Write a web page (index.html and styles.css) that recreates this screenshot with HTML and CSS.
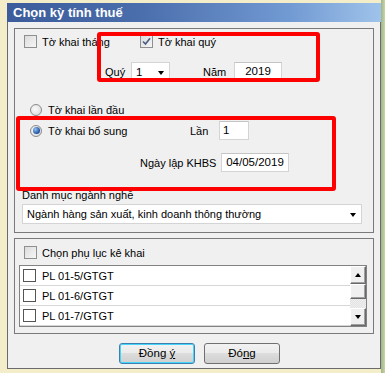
FILE: index.html
```html
<!DOCTYPE html>
<html>
<head>
<meta name="viewport" content="width=device-width, initial-scale=1">
<link rel="stylesheet" href="styles.css">
</head>
<body>
  <div class="screen">
    <div class="window">
      <div class="titlebar">Chọn kỳ tính thuế</div>

      <div class="client">
        <div class="group group-top">
          <div class="row row-kind">
            <label class="check-item item-month"><span class="check"></span>Tờ khai tháng</label>
            <label class="check-item"><span class="check"><svg width="9" height="9" viewBox="0 0 9 9"><path d="M1 4.5 L3.5 7 L8 1.2" fill="none" stroke="#4c5f86" stroke-width="1.7"/></svg></span>Tờ khai quý</label>
          </div>

          <div class="row row-period">
            <span class="lbl lbl-quarter">Quý</span>
            <div class="combo combo-quarter"><span>1</span><span class="arrow"></span></div>
            <span class="lbl lbl-year">Năm</span>
            <div class="field field-year">2019</div>
          </div>

          <div class="row row-first">
            <label class="radio-item"><span class="radio"></span>Tờ khai lần đầu</label>
          </div>

          <div class="row row-extra">
            <label class="radio-item item-extra"><span class="radio selected"></span>Tờ khai bổ sung</label>
            <span class="lbl lbl-times">Lần</span>
            <div class="field field-times">1</div>
          </div>

          <div class="row row-date">
            <span class="lbl lbl-date">Ngày lập KHBS</span>
            <div class="field field-date">04/05/2019</div>
          </div>

          <div class="row row-caption">
            <span class="lbl">Danh mục ngành nghề</span>
          </div>

          <div class="row row-trade">
            <div class="combo combo-trade"><span>Ngành hàng sản xuất, kinh doanh thông thường</span><span class="arrow"></span></div>
          </div>
        </div>

        <div class="group group-bottom">
          <div class="row row-annex">
            <label class="check-item"><span class="check"></span>Chọn phụ lục kê khai</label>
          </div>

          <div class="listbox">
            <ul class="list">
              <li><span class="check plain"></span>PL 01-5/GTGT</li>
              <li><span class="check plain"></span>PL 01-6/GTGT</li>
              <li><span class="check plain"></span>PL 01-7/GTGT</li>
            </ul>
            <div class="scrollbar">
              <div class="sb-btn"><span class="tri up"></span></div>
              <div class="sb-thumb"></div>
              <div class="sb-track"></div>
              <div class="sb-btn"><span class="tri down"></span></div>
            </div>
          </div>
        </div>

        <div class="buttons">
          <div class="btn btn-default">Đồng <u>ý</u></div>
          <div class="btn">Đó<u>n</u>g</div>
        </div>
      </div>
    </div>

    <!-- red highlight boxes drawn over the dialog -->
    <div class="mark mark-period"></div>
    <div class="mark mark-extra"></div>
  </div>
</body>
</html>
```

FILE: styles.css
```css
* {
  box-sizing: border-box;
}

body {
  margin: 0;
  font-family: "Liberation Sans", Arial, sans-serif;
  font-size: 11px;
  color: #000;
}

.screen {
  position: relative;
  width: 385px;
  height: 373px;
  overflow: hidden;
  background: linear-gradient(to right, #f4edca 0, #f4edca 381px, #9fb58a 381px, #c7d6a6 385px);
  padding: 3px 0 0 7px;
}

/* Dialog window */
.window {
  width: 374px;
  height: 366px;
  background: #f0f0f0;
  border: 1px solid #6b6b6b;
  border-top: none;
  display: flex;
  flex-direction: column;
}

.titlebar {
  height: 19px;
  margin: 0 -1px;
  padding: 1px 0 0 6px;
  background: linear-gradient(to right, #3c5c9b 0%, #4a6dab 35%, #7199d2 75%, #9fc3ea 100%);
  color: #fff;
  font-size: 13px;
  font-weight: bold;
  line-height: 17px;
}

.client {
  flex: 1;
  padding: 6px 6px 0 6px;
}

/* Group boxes */
.group {
  border: 1px solid #7a7a7a;
  width: 360px;
}

.group-top {
  height: 205px;
  padding: 6px 0 0 0;
}

.group-bottom {
  height: 96px;
  margin-top: 5px;
  padding: 7px 0 0 0;
}

.row {
  display: flex;
  align-items: center;
}

.lbl {
  white-space: nowrap;
}

/* Top group rows */
.row-kind {
  height: 13px;
  padding-left: 9px;
}

.item-month {
  width: 116px;
}

.row-period {
  height: 19px;
  margin-top: 14px;
  padding-left: 90px;
}

.lbl-quarter {
  width: 26px;
}

.lbl-year {
  width: 31px;
  margin-left: 33px;
}

.row-first {
  height: 13px;
  margin-top: 22px;
  padding-left: 15px;
}

.row-extra {
  height: 19px;
  margin-top: 5px;
  padding-left: 15px;
}

.item-extra {
  width: 160px;
}

.lbl-times {
  width: 29px;
}

.row-date {
  height: 19px;
  margin-top: 13px;
  padding-left: 125px;
}

.lbl-date {
  width: 81px;
}

.row-caption {
  height: 13px;
  margin-top: 16px;
  padding-left: 7px;
}

.row-trade {
  height: 20px;
  margin-top: 3px;
  padding-left: 7px;
}

/* Checkboxes and radios */
.check-item,
.radio-item {
  display: flex;
  align-items: center;
  white-space: nowrap;
}

.check {
  width: 13px;
  height: 13px;
  margin-right: 5px;
  border: 1px solid #8e8f8f;
  background: linear-gradient(135deg, #dcdcdc, #f6f6f6);
  display: flex;
  align-items: center;
  justify-content: center;
  flex-shrink: 0;
}

.check.plain {
  border-color: #555;
  background: #fff;
}

.radio {
  width: 12px;
  height: 12px;
  margin-right: 6px;
  border: 1px solid #8a8a8a;
  border-radius: 50%;
  background: radial-gradient(circle at 40% 40%, #fafafa, #d6d6d6);
  display: flex;
  align-items: center;
  justify-content: center;
}

.radio.selected::after {
  content: "";
  width: 7px;
  height: 7px;
  border-radius: 50%;
  background: radial-gradient(circle at 35% 35%, #8fc0f5, #1d4f9e 70%);
}

/* Inputs */
.field {
  height: 19px;
  background: #fff;
  border: 1px solid #d4d4d4;
  border-top-color: #c4c4c4;
  padding: 0 3px;
  line-height: 17px;
  font-size: 11.5px;
}

.field-year {
  width: 48px;
  text-align: center;
}

.field-times {
  width: 30px;
}

.field-date {
  width: 68px;
  text-align: center;
}

.combo {
  height: 19px;
  background: #fff;
  border: 1px solid #d4d4d4;
  display: flex;
  align-items: center;
  justify-content: space-between;
  padding: 0 4px 0 4px;
  font-size: 11.5px;
}

.combo-quarter {
  width: 39px;
}

.combo-trade {
  width: 340px;
  height: 20px;
  font-size: 11px;
}

.arrow {
  width: 0;
  height: 0;
  border-left: 3.5px solid transparent;
  border-right: 3.5px solid transparent;
  border-top: 4px solid #000;
  margin-right: 1px;
  margin-top: 2px;
}

/* Bottom group */
.row-annex {
  height: 13px;
  padding-left: 9px;
}

.listbox {
  margin: 6px 0 0 4px;
  width: 348px;
  height: 62px;
  border: 1px solid #828282;
  background: #fff;
  display: flex;
}

.list {
  flex: 1;
  margin: 0;
  padding: 0;
  list-style: none;
}

.list li {
  height: 20px;
  border-bottom: 1px solid #d6d6d6;
  display: flex;
  align-items: center;
  padding-left: 3px;
  font-size: 11px;
}

.list li .check {
  margin-right: 6px;
}

.scrollbar {
  width: 16px;
  display: flex;
  flex-direction: column;
}

.sb-btn,
.sb-thumb {
  background: #f0f0f0;
  border: 1px solid;
  border-color: #fff #696969 #696969 #fff;
  box-shadow: inset -1px -1px 0 #a0a0a0;
}

.sb-btn {
  height: 18px;
  display: flex;
  align-items: center;
  justify-content: center;
}

.sb-thumb {
  height: 15px;
}

.sb-track {
  flex: 1;
  background: repeating-conic-gradient(#f0f0f0 0 25%, #e2e2e2 0 50%) 0 0 / 2px 2px;
}

.tri {
  width: 0;
  height: 0;
  border-left: 3.5px solid transparent;
  border-right: 3.5px solid transparent;
}

.tri.up {
  border-bottom: 4px solid #000;
}

.tri.down {
  border-top: 4px solid #000;
}

/* Dialog buttons */
.buttons {
  display: flex;
  gap: 9px;
  margin: 9px 0 0 105px;
}

.btn {
  width: 76px;
  height: 21px;
  border: 1px solid #707070;
  border-radius: 3px;
  background: linear-gradient(#f2f2f2 0%, #ebebeb 45%, #dddddd 50%, #cfcfcf 100%);
  text-align: center;
  line-height: 19px;
  font-size: 11.5px;
}

.btn-default {
  border-color: #3c7fb1;
  box-shadow: inset 0 0 0 1px #48d3fb;
}

/* Red annotation boxes */
.mark {
  position: absolute;
  border: 4px solid #ff0000;
  border-radius: 3px;
}

.mark-period {
  left: 97px;
  top: 32px;
  width: 223px;
  height: 50px;
}

.mark-extra {
  left: 16px;
  top: 116px;
  width: 320px;
  height: 75px;
}
```
